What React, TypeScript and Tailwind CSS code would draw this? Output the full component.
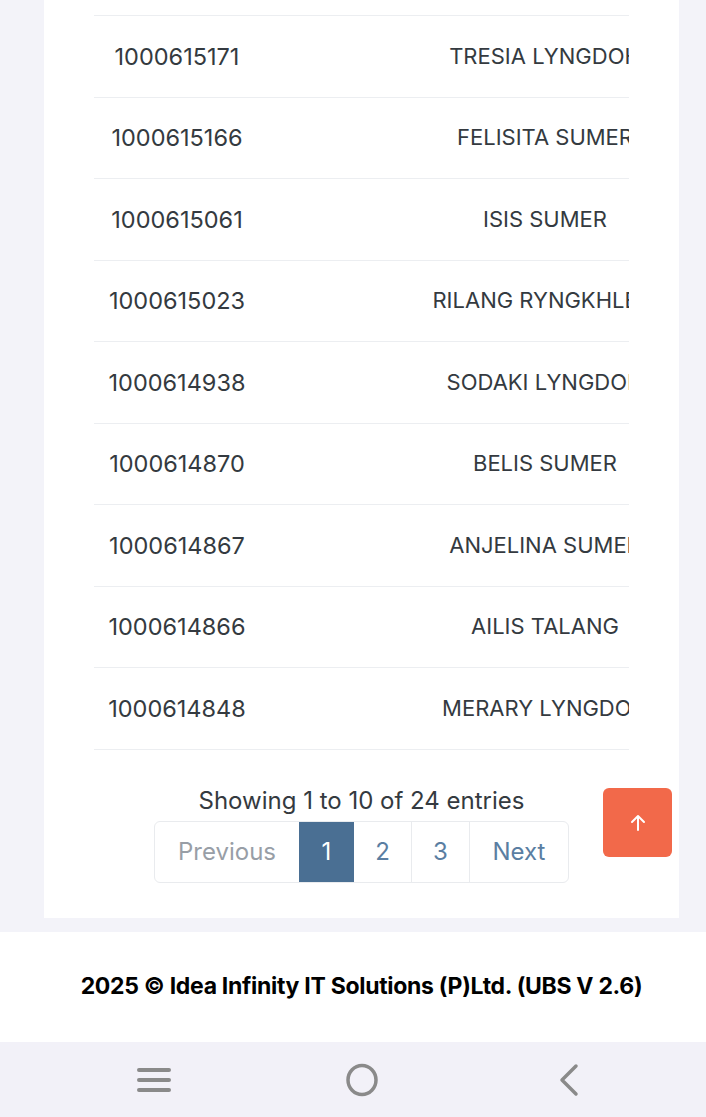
import React from 'react';

const rows = [
    { id: '1000615171', name: 'TRESIA LYNGDOH' },
    { id: '1000615166', name: 'FELISITA SUMER' },
    { id: '1000615061', name: 'ISIS SUMER' },
    { id: '1000615023', name: 'RILANG RYNGKHLEM' },
    { id: '1000614938', name: 'SODAKI LYNGDOH' },
    { id: '1000614870', name: 'BELIS SUMER' },
    { id: '1000614867', name: 'ANJELINA SUMER' },
    { id: '1000614866', name: 'AILIS TALANG' },
    { id: '1000614848', name: 'MERARY LYNGDOH' },
];

export default function App() {
    return (
        <div className="relative min-h-[1117px] bg-[#f3f3f9] text-[#343a40] font-['Inter','Noto_Sans',sans-serif]">
            {/* card */}
            <div className="mx-[44px] w-[635px] bg-white pb-[35px]">
                <div className="ml-[50px] w-[535px] overflow-hidden">
                    <div className="w-[736px]">
                        <div className="h-[16px] border-b border-[#eceef1]" />
                        {rows.map((r) => (
                            <div key={r.id} className="flex h-[81.5px] items-center border-b border-[#eceef1] whitespace-nowrap">
                                <div className="w-[166px] text-center text-[23.5px]">{r.id}</div>
                                <div className="w-[570px] text-center text-[22px]">{r.name}</div>
                            </div>
                        ))}
                    </div>
                </div>

                <div className="mt-[37px] flex flex-col items-center">
                    <div className="text-[24px] leading-[28px] text-[#343a40]">Showing 1 to 10 of 24 entries</div>
                    <div className="mt-[6px] flex h-[62px] overflow-hidden rounded-[6px] border border-[#e9ebee] text-[24px]">
                        <div className="flex w-[144px] items-center justify-center text-[#989ea6]">Previous</div>
                        <div className="flex w-[55px] items-center justify-center bg-[#4a6f93] text-white">1</div>
                        <div className="flex w-[58px] items-center justify-center border-r border-[#e9ebee] text-[#5a7ea2]">2</div>
                        <div className="flex w-[58px] items-center justify-center border-r border-[#e9ebee] text-[#5a7ea2]">3</div>
                        <div className="flex w-[98px] items-center justify-center text-[#5a7ea2]">Next</div>
                    </div>
                </div>
            </div>

            {/* scroll to top */}
            <button className="absolute left-[603px] top-[788px] flex h-[69px] w-[69px] items-center justify-center rounded-[6px] bg-[#f2694a]">
                <svg width="18" height="20" viewBox="0 0 18 20" fill="none" stroke="white" strokeWidth="2" strokeLinecap="round" strokeLinejoin="round">
                    <path d="M9 17V3M3 9l6-6 6 6" />
                </svg>
            </button>

            {/* footer */}
            <div className="mt-[14px] flex h-[110px] items-center justify-center bg-white pl-[17px]">
                <span className="text-[23px] font-bold tracking-[-0.3px] text-black">2025 © Idea Infinity IT Solutions (P)Ltd. (UBS V 2.6)</span>
            </div>

            {/* android nav bar */}
            <div className="flex h-[76px] items-center bg-[#f2f1f8]">
                <div className="flex w-full items-center">
                    <svg className="ml-[135px]" width="38" height="30" viewBox="0 0 38 30" fill="none" stroke="#8a8a8a" strokeWidth="4" strokeLinecap="round">
                        <path d="M4 5h30M4 15h30M4 25h30" />
                    </svg>
                    <svg className="ml-[171px]" width="36" height="36" viewBox="0 0 36 36" fill="none" stroke="#8a8a8a" strokeWidth="3.5">
                        <ellipse cx="18" cy="18" rx="14" ry="14.5" />
                    </svg>
                    <svg className="ml-[177px]" width="24" height="34" viewBox="0 0 24 34" fill="none" stroke="#8a8a8a" strokeWidth="3.5" strokeLinecap="round" strokeLinejoin="round">
                        <path d="M19 3L5 17l14 14" />
                    </svg>
                </div>
            </div>
        </div>
    );
}
